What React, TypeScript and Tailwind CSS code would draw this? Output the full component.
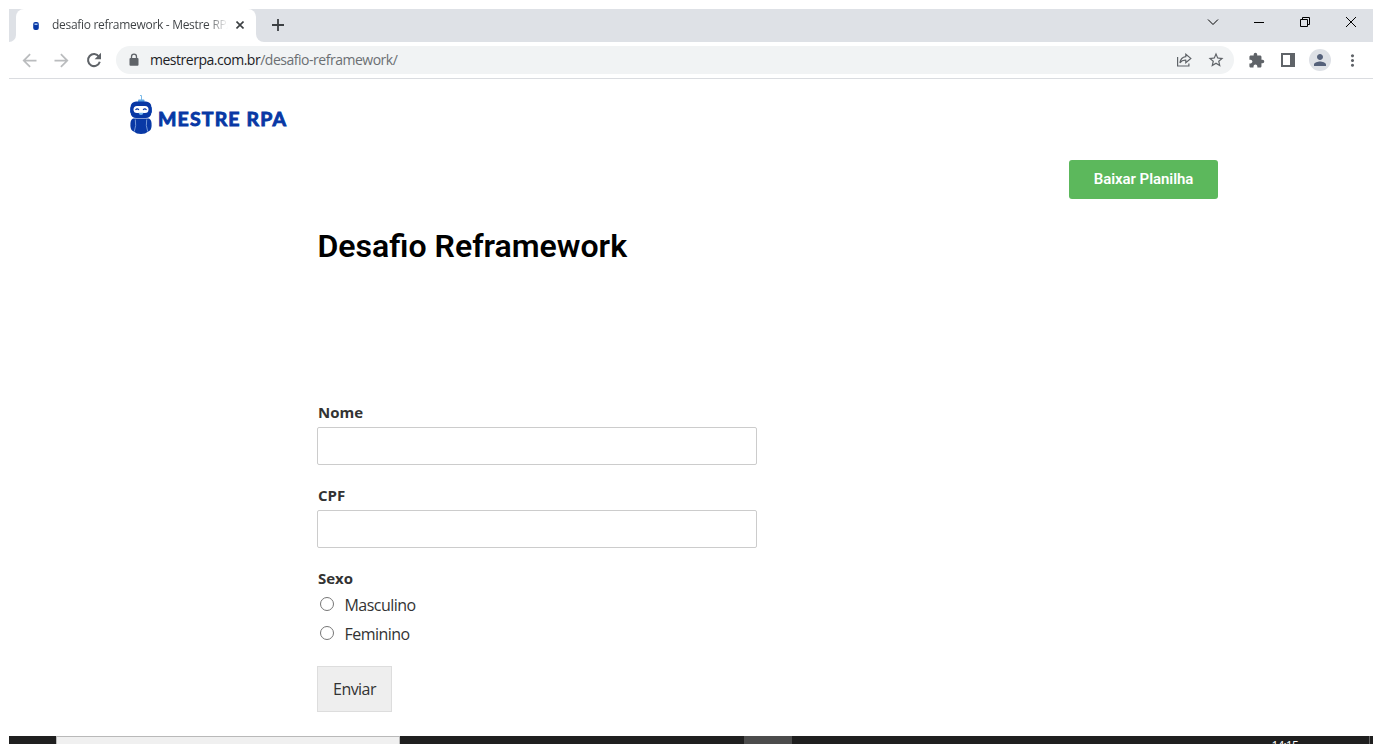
import type { ReactNode } from "react";
import { MdExtension, MdPerson, MdArrowBack, MdArrowForward, MdStarOutline, MdMoreVert } from "react-icons/md";

function Robot() {
  return (
    <svg viewBox="0 0 24 40" className="h-10 w-6 shrink-0">
      <path d="M11 .5h1.500v5.500" fill="none" stroke="#7cbbe8" strokeWidth="1" />
      <rect x="9" y="4.500" width="6.500" height="4" rx="1" fill="#5ba5e4" />
      <rect x="1" y="11.500" width="22" height="7" rx="2" fill="#2a60c0" />
      <rect x="1.600" y="6.500" width="20.800" height="16.500" rx="5.500" fill="#0838a5" />
      <rect x="4.500" y="11" width="15" height="7" rx="3.500" fill="#fff" />
      <path d="M6.500 15q1.700-2.200 3.400 0M14.100 15q1.700-2.200 3.400 0" fill="none" stroke="#0838a5" strokeWidth="1.200" />
      <path d="M9.500 17.800h5q-.5 2.300-2.500 2.300t-2.500-2.300z" fill="#77b7ed" />
      <path d="M4 23.600h16q3 1.500 2.600 7.400-.3 4.500-3.300 5.500-2.800 2.500-7.300 2.500t-7.300-2.500q-3-1-3.300-5.500-.4-5.900 2.600-7.400z" fill="#0838a5" />
      <path d="M6.300 24.500q1.200 6-1 12M17.700 24.500q-1.200 6 1 12" fill="none" stroke="#8faee2" strokeWidth=".8" />
    </svg>
  );
}

function TabStrip() {
  return (
    <div className="flex h-[33px] bg-[#dee1e6]">
      <div className="w-[7px] bg-white">
        <div className="h-full rounded-br-[7px] bg-[#dee1e6]" />
      </div>
      <div className="flex w-60 items-center rounded-t-lg bg-white pl-4">
        <svg viewBox="0 0 8 10" className="h-[10px] w-2 shrink-0">
          <rect x="1.200" y="1" width="5.600" height="8" rx="2" fill="#0838a5" />
          <rect x="2.500" y="2.500" width="3" height="1.500" fill="#a9c8f2" />
        </svg>
        <div className="-mt-px ml-3 w-[176px] overflow-hidden whitespace-nowrap bg-gradient-to-r from-[#3c4043] from-88% to-transparent bg-clip-text text-[12px] leading-4 tracking-[-0.3px] text-transparent">
          desafio reframework - Mestre RPA
        </div>
        <svg viewBox="0 0 8 8" className="mb-px ml-[8px] h-2 w-2 shrink-0">
          <path d="M.5.5l7 7M7.500.5l-7 7" stroke="#3c4043" strokeWidth="1.600" />
        </svg>
      </div>
      <div className="flex w-[28px] bg-white">
        <div className="flex w-full items-center justify-end rounded-bl-[8px] bg-[#dee1e6]">
          <svg viewBox="0 0 12 12" className="mb-px h-3 w-3">
            <path d="M6 0v12M0 6h12" stroke="#3c4043" strokeWidth="1.800" />
          </svg>
        </div>
      </div>
      <div className="ml-auto flex h-[26px] items-center">
        <svg viewBox="0 0 184 26" className="h-[26px] w-[184px]" fill="none" stroke="#000" strokeWidth="1">
          <path d="M19 10.500l5 5 5-5M65 13.500h10M111.500 10.500h7v7h-7zM113.500 10V8.500h7v7H119M157 8l10 10M167 8l-10 10" />
        </svg>
      </div>
    </div>
  );
}

function Slot({ children }: { children: ReactNode }) {
  return <div className="flex w-8 items-center justify-center text-[#5f6368]">{children}</div>;
}

function Toolbar() {
  return (
    <div className="flex h-[37px] items-center border-b border-[#dadce0] pl-[5px] pr-[5px]">
      <Slot><MdArrowBack size={21} color="#babcbe" className="mr-px" /></Slot>
      <Slot><MdArrowForward size={21} color="#babcbe" className="mr-px" /></Slot>
      <Slot>
        <svg viewBox="0 0 16 16" className="h-4 w-4">
          <path d="M13 4.700A6 6 0 1 0 13.800 9.800" fill="none" stroke="#5f6368" strokeWidth="2" />
          <path d="M15 .8v6.400H8.600z" fill="#5f6368" />
        </svg>
      </Slot>
      <div className="ml-[6px] flex h-7 w-[1118px] items-center rounded-full bg-[#f1f3f4] pl-[11px] pr-[2px]">
        <svg viewBox="0 0 14 14" className="h-[14px] w-[14px]">
          <rect x="2.500" y="5" width="9" height="7.800" rx="1" fill="#5f6368" />
          <path d="M4.500 5.500V3.700a2.500 2.500 0 0 1 5 0v1.800" fill="none" stroke="#5f6368" strokeWidth="1.300" />
        </svg>
        <div className="ml-[9px] whitespace-nowrap text-[14px] leading-5 tracking-[-0.48px] text-[#202124]">
          mestrerpa.com.br<span className="text-[#6b6f73]">/desafio-reframework/</span>
        </div>
        <div className="ml-auto flex">
          <Slot>
            <svg viewBox="0 0 16 16" className="h-4 w-4" fill="none" stroke="#5f6368" strokeWidth="1.200">
              <path d="M1.600 5v9h11.300v-2.500M9.800 2.200l5 4.200-5 4.200V8.200C7.200 8 5.300 9 3.900 10.900 4.400 7.500 6.200 5.200 9.800 4.700z" />
            </svg>
          </Slot>
          <Slot><MdStarOutline size={18} /></Slot>
        </div>
      </div>
      <div className="ml-[6px] flex items-center">
        <Slot><MdExtension size={17} /></Slot>
        <Slot>
          <svg viewBox="0 0 14 14" className="h-[14px] w-[14px]">
            <path fill="#5f6368" fillRule="evenodd" d="M0 0h14v14H0zM2 2v10h7V2z" />
          </svg>
        </Slot>
        <Slot>
          <div className="flex h-[22px] w-[22px] items-center justify-center rounded-full bg-[#dee1e6]">
            <MdPerson size={18} color="#55617a" />
          </div>
        </Slot>
        <Slot><MdMoreVert size={19} /></Slot>
      </div>
    </div>
  );
}

function Field({ label }: { label: string }) {
  return (
    <label className="mb-[20px] block">
      <span className="block h-[25px] pl-px text-[15px] font-bold leading-5 text-[#333]">{label}</span>
      <input type="text" className="block h-[38px] w-[440px] rounded-xs border border-[#ccc] bg-white px-2" />
    </label>
  );
}

function Option({ label }: { label: string }) {
  return (
    <label className="flex h-[29px] items-center">
      <input type="radio" name="sexo" className="mb-[2px] ml-[3px] h-[14px] w-[14px] appearance-none rounded-full border border-[#767676] bg-white" />
      <span className="ml-[10.500px] text-[16px] leading-5 tracking-[-0.52px] text-[#333]">{label}</span>
    </label>
  );
}

export default function App() {
  return (
    <div className="flex h-[744px] w-[1382px] flex-col overflow-hidden bg-white px-[9px] pt-[9px] font-['Open_Sans','Noto_Sans',sans-serif]">
      <TabStrip />
      <Toolbar />
      <main className="flex h-[657px] flex-col">
        <header className="flex h-[81px] items-start pl-[120px] pt-[16px]">
          <Robot />
          <span className="ml-[5px] mt-[10px] whitespace-nowrap font-['Lato',sans-serif] text-[19.500px] font-bold leading-[28px] tracking-[1.150px] text-[#0838a5] [-webkit-text-stroke:0.9px_#0838a5]">
            MESTRE RPA
          </span>
        </header>
        <div className="flex justify-end pr-[155px]">
          <button className="h-[39px] w-[149px] rounded-[3px] bg-[#5cb85c] font-['Roboto',sans-serif] text-[15px] font-semibold tracking-[-0.05px] text-white">
            Baixar Planilha
          </button>
        </div>
        <h1 className="ml-[308.500px] mt-[27px] h-10 font-['Roboto',sans-serif] text-[32.050px] font-semibold leading-10 text-black">
          Desafio Reframework
        </h1>
        <form className="ml-[308px] mt-[136px] w-[440px]">
          <Field label="Nome" />
          <Field label="CPF" />
          <fieldset className="mt-[20px]">
            <legend className="h-[22px] pl-px text-[15px] font-bold leading-5 text-[#333]">Sexo</legend>
            <Option label="Masculino" />
            <Option label="Feminino" />
          </fieldset>
          <button type="button" className="mt-[18px] h-[46px] w-[75px] border border-[#ddd] bg-[#eee] text-[16px] tracking-[-0.55px] text-[#333]">
            Enviar
          </button>
        </form>
      </main>
      <footer className="flex h-2 shrink-0 overflow-hidden bg-[#1f1f1f]">
        <div className="ml-[47px] w-[344px] border-x border-t border-[#b9b9b9] bg-[#f0f0f0]" />
        <div className="ml-[344px] w-12 bg-[#4c4c4c]" />
        <div className="ml-auto mr-[71px] pt-[4px] text-[12px] leading-[12px] tracking-[-0.8px] text-white">14:15</div>
        <div className="mr-[3px] w-px bg-[#666]" />
      </footer>
    </div>
  );
}
